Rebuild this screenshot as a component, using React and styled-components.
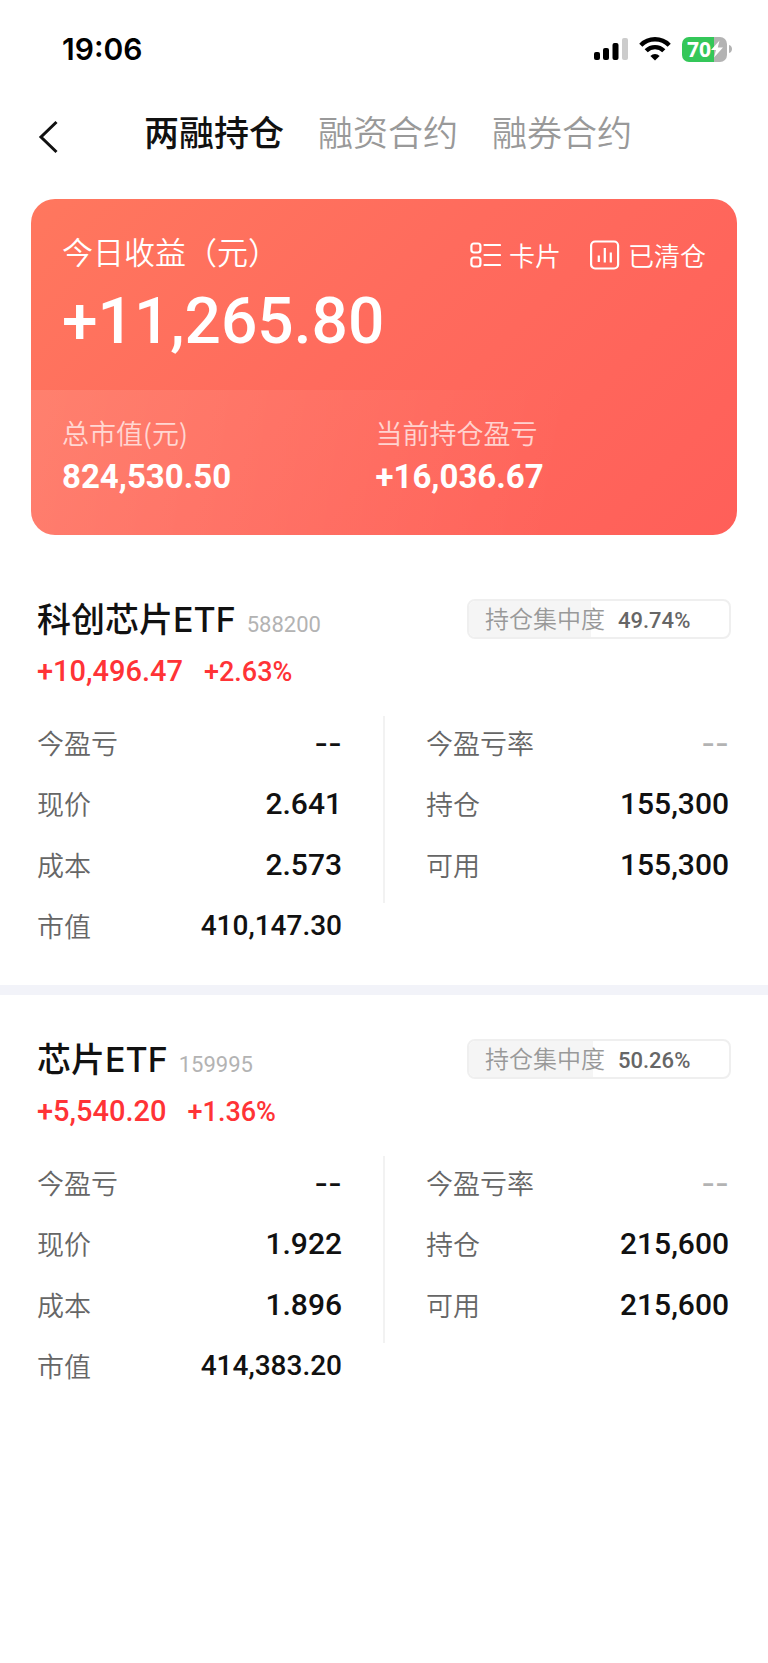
import React from "react";
import styled, { createGlobalStyle } from "styled-components";

const cjk = '"Noto Sans CJK SC", sans-serif';

const GlobalStyle = createGlobalStyle`
  *, *::before, *::after { box-sizing: border-box; }
  body {
    margin: 0;
    background: #fff;
    color: #111;
    font-family: ${cjk};
  }
  button {
    margin: 0;
    padding: 0;
    border: 0;
    background: none;
    color: inherit;
    font: inherit;
    cursor: pointer;
  }
  dl, dd, h2, p { margin: 0; }
`;

const Page = styled.main`
  min-height: 100vh;
`;

const StatusBar = styled.div`
  display: flex;
  align-items: center;
  justify-content: space-between;
  height: 98px;
  padding: 0 36px 0 62px;
`;

const Clock = styled.time`
  font: 600 30px/40px Inter, sans-serif;
  color: #000;
`;

const StatusIcons = styled.div`
  display: flex;
  align-items: center;
  gap: 11px;
`;

const Battery = styled.div`
  display: flex;
  align-items: center;
  gap: 2px;
`;

const BatteryBody = styled.div`
  display: flex;
  align-items: center;
  width: 45px;
  height: 25px;
  padding-left: 5px;
  border-radius: 7px;
  background: linear-gradient(90deg, #34c759 32px, #b3b3b3 32px);
`;

const BatteryLevel = styled.span`
  font: 700 21px/30px "Open Sans", sans-serif;
  color: #fff;
`;

const Header = styled.header`
  display: flex;
  align-items: center;
  height: 101px;
  padding: 0 32px 36px 38px;
`;

const BackButton = styled.button`
  display: flex;
  width: 106px;
  padding-top: 13px;
`;

const Tabs = styled.nav`
  display: flex;
  gap: 34px;
`;

const Tab = styled.button`
  font-size: 35px;
  line-height: 48px;
  font-weight: ${(p) => (p.$active ? 500 : 350)};
  color: ${(p) => (p.$active ? "#111" : "#999")};
`;

const SummaryCard = styled.section`
  margin: 0 31px 20px;
  border-radius: 24px;
  overflow: hidden;
  color: #fff;
  background: linear-gradient(135deg, #ff775e 0%, #ff6b5d 45%, #ff5f59 100%);
`;

const SummaryMain = styled.div`
  height: 191px;
  padding: 28px 31px 0;
`;

const SummaryHead = styled.div`
  display: flex;
  align-items: center;
  justify-content: space-between;
`;

const SummaryTitle = styled.h2`
  font-size: 31px;
  line-height: 46px;
  font-weight: 350;
`;

const Actions = styled.div`
  display: flex;
  gap: 29px;
  padding-top: 8px;
`;

const Action = styled.button`
  display: flex;
  align-items: center;
  gap: 8px;
  font-size: 26px;
  line-height: 40px;
  font-weight: 350;
`;

const TodayProfit = styled.p`
  font: 500 64px/80px Roboto, sans-serif;
  padding-top: 7px;
`;

const SummaryFoot = styled.dl`
  display: grid;
  grid-template-columns: 1fr 1fr;
  height: 145px;
  padding: 23px 48px 0 31px;
  background: linear-gradient(100deg, rgba(255, 255, 255, 0.1), rgba(255, 255, 255, 0) 75%);
`;

const SummaryLabel = styled.dt`
  font-size: 27px;
  line-height: 40px;
  font-weight: 350;
  opacity: 0.7;
`;

const SummaryValue = styled.dd`
  font: 700 33px/48px Roboto, sans-serif;
`;

const Holding = styled.section`
  padding: 44px 39px 39px 37px;
  & + & {
    border-top: 10px solid #f2f3f9;
  }
`;

const HoldingHead = styled.div`
  display: flex;
  align-items: flex-start;
  justify-content: space-between;
  height: 40px;
`;

const HoldingName = styled.div`
  display: flex;
  align-items: baseline;
  gap: 11px;
`;

const StockName = styled.h2`
  font: 500 34px/42px Inter, ${cjk};
`;

const StockCode = styled.span`
  font: 400 22px/40px Roboto, sans-serif;
  color: #b3b3b3;
`;

const Concentration = styled.div`
  position: relative;
  display: flex;
  align-items: baseline;
  gap: 13px;
  width: 264px;
  height: 40px;
  margin-right: -2px;
  padding: 0 16px;
  border: 2px solid #efefef;
  border-radius: 8px;
  overflow: hidden;
`;

const ConcentrationTrack = styled.div`
  position: absolute;
  inset: 0 14px 0 0;
`;

const ConcentrationFill = styled.div`
  height: 100%;
  background: #f5f5f5;
`;

const ConcentrationLabel = styled.span`
  position: relative;
  font-size: 24px;
  line-height: 34px;
  font-weight: 350;
  color: #999;
`;

const ConcentrationValue = styled.span`
  position: relative;
  font: 500 22px/34px Roboto, sans-serif;
  color: #666;
`;

const ProfitLine = styled.div`
  display: flex;
  align-items: baseline;
  gap: 21px;
  height: 40px;
  margin: 12px 0 25px;
  color: #ff3336;
`;

const Profit = styled.span`
  font: 500 29px/40px Roboto, sans-serif;
`;

const ProfitRate = styled.span`
  font: 500 27px/40px Roboto, sans-serif;
`;

const Details = styled.div`
  display: grid;
  grid-template-columns: 1fr 1fr;
  align-items: start;
`;

const Column = styled.dl`
  display: flex;
  flex-direction: column;
  gap: 21px;
  padding: ${(p) => (p.$divided ? "7px 0 18px 41px" : "7px 41px 0 0")};
  border-left: ${(p) => (p.$divided ? "2px solid #f2f2f2" : "0")};
`;

const Row = styled.div`
  display: flex;
  justify-content: space-between;
  height: 40px;
`;

const RowLabel = styled.dt`
  font-size: 27px;
  line-height: 40px;
  font-weight: 350;
  color: #666;
`;

const RowValue = styled.dd`
  font: 500 ${(p) => (p.$compact ? 28 : 30)}px/40px Roboto, sans-serif;
  color: ${(p) => (p.$muted ? "#b3b3b3" : "#111")};
`;

const EmptyValue = styled.span`
  font-family: Inter, sans-serif;
`;

const SignalIcon = () => (
  <svg width="34" height="24" viewBox="0 0 34 24" aria-hidden="true">
    <rect x="0" y="15" width="6" height="8" rx="2" />
    <rect x="9" y="11" width="6" height="12" rx="2" />
    <rect x="18.500" y="6" width="6" height="17" rx="2" />
    <rect x="28" y="1" width="6" height="22" rx="2" fill="#ccc" />
  </svg>
);

const WifiIcon = () => (
  <svg width="32" height="24" viewBox="0 0 32 24" aria-hidden="true">
    <g fill="none" stroke="#000" strokeWidth="4.4">
      <path d="M1.800 8.200a20 20 0 0 1 28.400 0" />
      <path d="M7.200 13.800a12.400 12.400 0 0 1 17.600 0" />
    </g>
    <path d="M16 23.600l-4.600-4.700a6.600 6.600 0 0 1 9.200 0z" />
  </svg>
);

const BoltIcon = () => (
  <svg width="12" height="18" viewBox="0 0 12 18" fill="#fff" aria-hidden="true">
    <path d="M8.500 0.500L0 10h5L3 17.500l9-10H6.800z" />
  </svg>
);

const BatteryTip = () => (
  <svg width="3" height="8" viewBox="0 0 3 8" fill="#b3b3b3" aria-hidden="true">
    <path d="M0 0c4 1 4 7 0 8z" />
  </svg>
);

const BackIcon = () => (
  <svg width="20" height="34" viewBox="0 0 20 34" fill="none" stroke="#111" strokeWidth="3" aria-hidden="true">
    <path d="M18.500 2L3 17l15.500 15" />
  </svg>
);

const CardsIcon = () => (
  <svg width="31" height="30" viewBox="0 0 31 30" fill="none" stroke="#fff" strokeWidth="2.200" aria-hidden="true">
    <rect x="1.400" y="3.500" width="9" height="9" rx="2.500" />
    <rect x="1.400" y="17.500" width="9" height="9" rx="2.500" />
    <path d="M14.500 5h15.500M14.500 15h15.500M14.500 25h15.500" strokeLinecap="round" />
  </svg>
);

const ChartIcon = () => (
  <svg width="30" height="30" viewBox="0 0 30 30" fill="none" stroke="#fff" strokeWidth="2.200" aria-hidden="true">
    <rect x="1.100" y="1.500" width="27" height="27" rx="4" />
    <path d="M8.800 15.500v6.500M14.800 8v14.500M20.800 12.500v10" />
  </svg>
);

const holdings = [
  {
    name: "科创芯片ETF",
    code: "588200",
    share: "49.74%",
    profit: "+10,496.47",
    rate: "+2.63%",
    price: "2.641",
    cost: "2.573",
    value: "410,147.30",
    amount: "155,300",
  },
  {
    name: "芯片ETF",
    code: "159995",
    share: "50.26%",
    profit: "+5,540.20",
    rate: "+1.36%",
    price: "1.922",
    cost: "1.896",
    value: "414,383.20",
    amount: "215,600",
  },
];

const Field = ({ label, value, ...style }) => (
  <Row>
    <RowLabel>{label}</RowLabel>
    <RowValue {...style}>
      {value === "--" ? <EmptyValue>--</EmptyValue> : value}
    </RowValue>
  </Row>
);

export default function App() {
  return (
    <Page>
      <GlobalStyle />
      <StatusBar>
        <Clock>19:06</Clock>
        <StatusIcons>
          <SignalIcon />
          <WifiIcon />
          <Battery>
            <BatteryBody>
              <BatteryLevel>70</BatteryLevel>
              <BoltIcon />
            </BatteryBody>
            <BatteryTip />
          </Battery>
        </StatusIcons>
      </StatusBar>
      <Header>
        <BackButton type="button" aria-label="返回">
          <BackIcon />
        </BackButton>
        <Tabs>
          <Tab type="button" $active>两融持仓</Tab>
          <Tab type="button">融资合约</Tab>
          <Tab type="button">融券合约</Tab>
        </Tabs>
      </Header>
      <SummaryCard>
        <SummaryMain>
          <SummaryHead>
            <SummaryTitle>今日收益（元）</SummaryTitle>
            <Actions>
              <Action type="button"><CardsIcon />卡片</Action>
              <Action type="button"><ChartIcon />已清仓</Action>
            </Actions>
          </SummaryHead>
          <TodayProfit>+11,265.80</TodayProfit>
        </SummaryMain>
        <SummaryFoot>
          <div>
            <SummaryLabel>总市值(元)</SummaryLabel>
            <SummaryValue>824,530.50</SummaryValue>
          </div>
          <div>
            <SummaryLabel>当前持仓盈亏</SummaryLabel>
            <SummaryValue>+16,036.67</SummaryValue>
          </div>
        </SummaryFoot>
      </SummaryCard>
      {holdings.map((h) => (
        <Holding key={h.code}>
          <HoldingHead>
            <HoldingName>
              <StockName>{h.name}</StockName>
              <StockCode>{h.code}</StockCode>
            </HoldingName>
            <Concentration>
              <ConcentrationTrack>
                <ConcentrationFill style={{ width: h.share }} />
              </ConcentrationTrack>
              <ConcentrationLabel>持仓集中度</ConcentrationLabel>
              <ConcentrationValue>{h.share}</ConcentrationValue>
            </Concentration>
          </HoldingHead>
          <ProfitLine>
            <Profit>{h.profit}</Profit>
            <ProfitRate>{h.rate}</ProfitRate>
          </ProfitLine>
          <Details>
            <Column>
              <Field label="今盈亏" value="--" />
              <Field label="现价" value={h.price} />
              <Field label="成本" value={h.cost} />
              <Field label="市值" value={h.value} $compact />
            </Column>
            <Column $divided>
              <Field label="今盈亏率" value="--" $muted />
              <Field label="持仓" value={h.amount} />
              <Field label="可用" value={h.amount} />
            </Column>
          </Details>
        </Holding>
      ))}
    </Page>
  );
}
